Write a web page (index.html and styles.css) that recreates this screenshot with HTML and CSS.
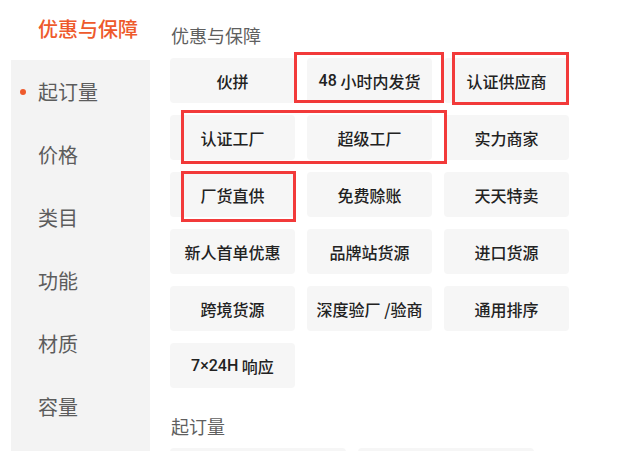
FILE: index.html
```html
<!DOCTYPE html>
<html lang="zh-CN">
<head>
<meta charset="utf-8">
<title>优惠与保障</title>
<link rel="stylesheet" href="styles.css">
</head>
<body>
<div class="page">
  <aside class="side">
    <div class="side-head">优惠与保障</div>
    <ul class="side-list">
      <li class="side-item active"><span class="dot"></span>起订量</li>
      <li class="side-item">价格</li>
      <li class="side-item">类目</li>
      <li class="side-item">功能</li>
      <li class="side-item">材质</li>
      <li class="side-item">容量</li>
    </ul>
  </aside>
  <main class="main">
    <h2 class="sec-title">优惠与保障</h2>
    <div class="grid">
      <div class="chip">伙拼</div>
      <div class="chip"><span class="num">48</span>&nbsp;小时内发货</div>
      <div class="chip">认证供应商</div>
      <div class="chip">认证工厂</div>
      <div class="chip">超级工厂</div>
      <div class="chip">实力商家</div>
      <div class="chip">厂货直供</div>
      <div class="chip">免费赊账</div>
      <div class="chip">天天特卖</div>
      <div class="chip">新人首单优惠</div>
      <div class="chip">品牌站货源</div>
      <div class="chip">进口货源</div>
      <div class="chip">跨境货源</div>
      <div class="chip">深度验厂 /验商</div>
      <div class="chip">通用排序</div>
      <div class="chip"><span class="num">7×24H</span>&nbsp;响应</div>
      <span class="mark mark-1"></span>
      <span class="mark mark-2"></span>
      <span class="mark mark-3"></span>
      <span class="mark mark-4"></span>
    </div>
    <h2 class="sec-title sec-next">起订量</h2>
    <div class="grid grid-wide">
      <div class="chip"></div>
      <div class="chip"></div>
    </div>
  </main>
</div>
</body>
</html>
```

FILE: styles.css
```css
* { box-sizing: border-box; }
html, body {
  margin: 0;
  padding: 0;
  background: #ffffff;
  font-family: "Noto Sans CJK SC", "Noto Sans", sans-serif;
}
.page {
  width: 626px;
  height: 451px;
  overflow: hidden;
  display: flex;
}
.side {
  margin-left: 11px;
  width: 139px;
  display: flex;
  flex-direction: column;
}
.side-head {
  height: 60px;
  padding-left: 27px;
  padding-top: 15px;
  font-size: 20px;
  line-height: 28px;
  font-weight: 500;
  color: #ee5a2c;
}
.side-list {
  list-style: none;
  margin: 0;
  padding: 0;
  flex: 1;
  background: #f3f3f3;
}
.side-item {
  height: 63px;
  display: flex;
  align-items: center;
  padding-left: 27px;
  font-size: 20px;
  color: #5c5c5c;
}
.dot {
  width: 6px;
  height: 6px;
  border-radius: 50%;
  background: #ee5a2c;
  margin-left: -18px;
  margin-right: 12px;
}
.main {
  margin-left: 20px;
  flex: 1;
}
.sec-title {
  margin: 0;
  padding-top: 23px;
  padding-left: 1px;
  height: 58px;
  font-size: 18px;
  line-height: 24px;
  font-weight: 400;
  color: #5f5f5f;
}
.sec-next {
  padding-top: 26px;
  height: 60px;
}
.grid {
  position: relative;
  display: grid;
  grid-template-columns: repeat(3, 125px);
  grid-auto-rows: 45px;
  column-gap: 12px;
  row-gap: 12px;
}
.grid-wide {
  grid-template-columns: repeat(2, 176px);
}
.chip {
  background: #f6f6f6;
  border-radius: 4px;
  display: flex;
  align-items: center;
  justify-content: center;
  font-size: 16px;
  font-weight: 500;
  color: #222222;
  white-space: nowrap;
}
.num {
  font-family: "Roboto", "Noto Sans", sans-serif;
  font-weight: 500;
  font-size: 16px;
}
.mark {
  position: absolute;
  border: 3px solid #f23a3a;
}
.mark-1 { left: 124px; top: -6px; width: 150px; height: 51px; }
.mark-2 { left: 282px; top: -6px; width: 117px; height: 53px; }
.mark-3 { left: 11px; top: 52px; width: 266px; height: 54px; }
.mark-4 { left: 11px; top: 113px; width: 115px; height: 51px; }
```
